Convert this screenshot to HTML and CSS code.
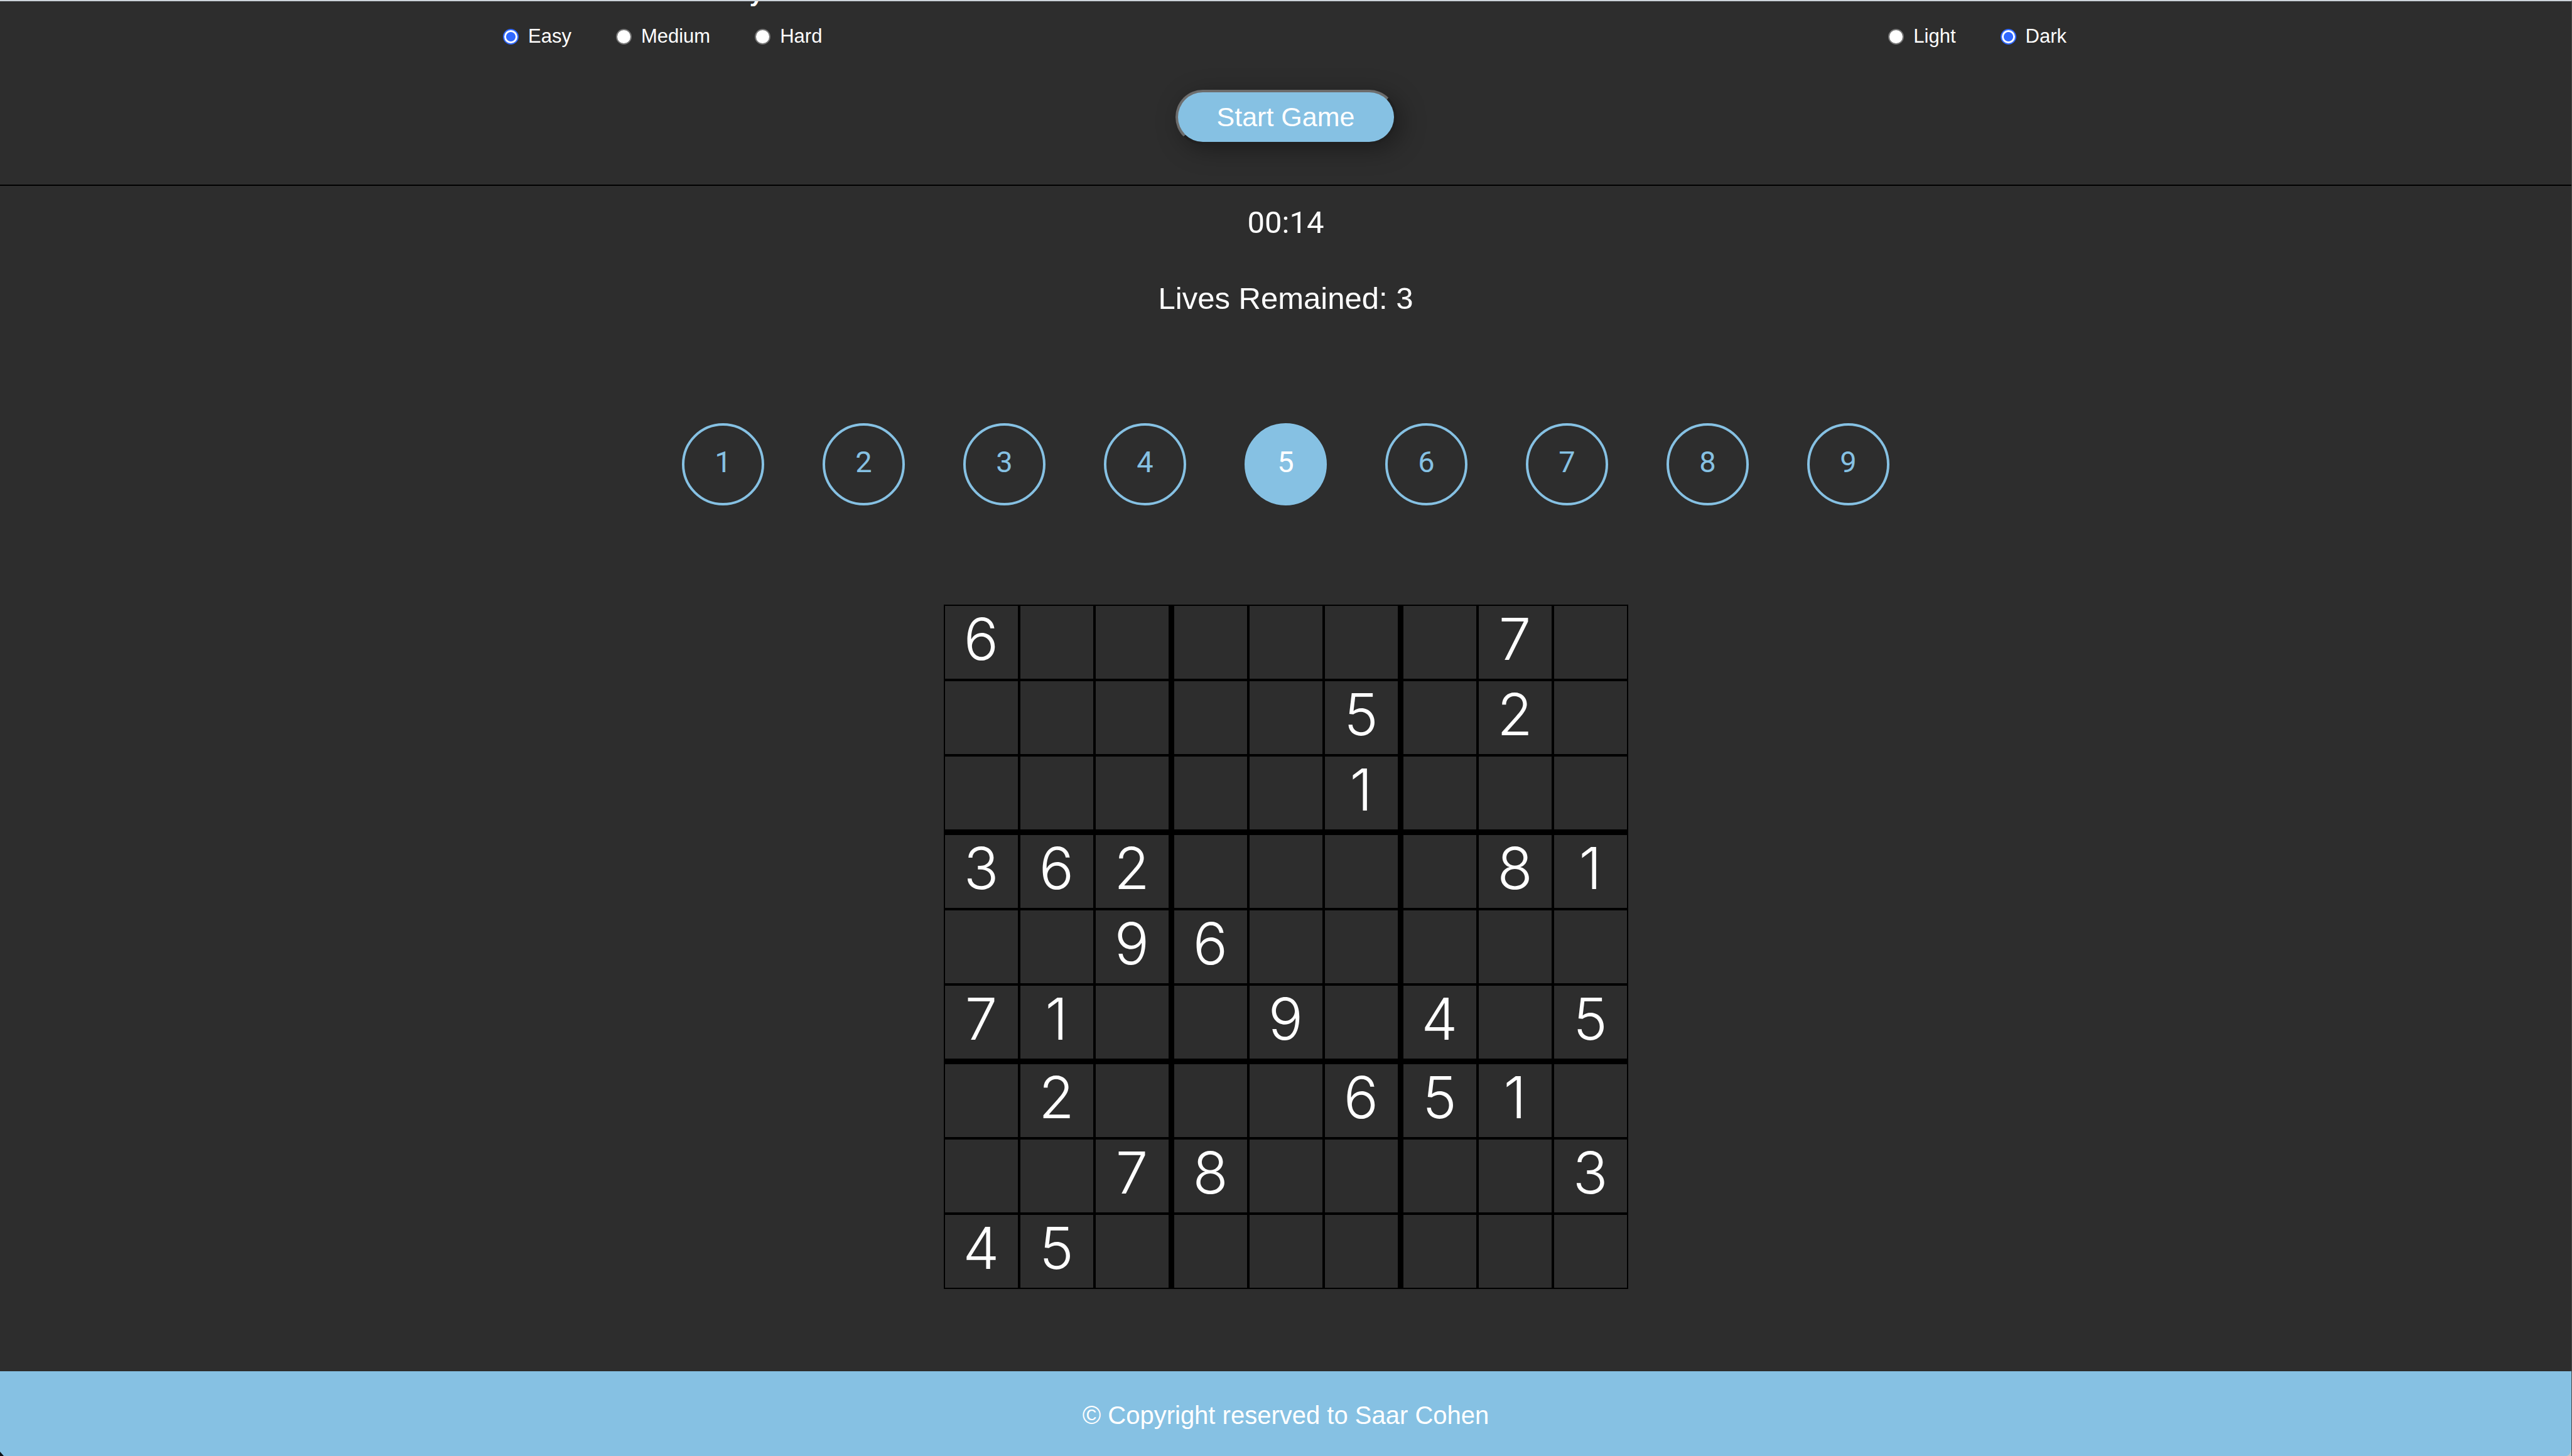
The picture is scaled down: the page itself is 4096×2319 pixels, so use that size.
FILE: index.html
```html
<!DOCTYPE html>
<html lang="en">
<head>
<meta charset="utf-8">
<title>Sudoku</title>
<link rel="stylesheet" href="styles.css">
</head>
<body>
<div class="app">
  <header class="setup">
    <div class="options">
      <section class="option">
        <h2 class="option-title">Choose Difficulty</h2>
        <div class="choices">
          <label class="choice"><input class="radio" type="radio" name="difficulty" checked>Easy</label>
          <label class="choice"><input class="radio" type="radio" name="difficulty">Medium</label>
          <label class="choice"><input class="radio" type="radio" name="difficulty">Hard</label>
        </div>
      </section>
      <section class="option">
        <div class="choices">
          <label class="choice"><input class="radio" type="radio" name="theme">Light</label>
          <label class="choice"><input class="radio" type="radio" name="theme" checked>Dark</label>
        </div>
      </section>
    </div>
    <button class="start" type="button">Start Game</button>
  </header>
  <main class="game">
    <p class="status timer">00:14</p>
    <p class="status">Lives Remained: 3</p>
    <div class="numbers">
      <button class="number" type="button">1</button>
      <button class="number" type="button">2</button>
      <button class="number" type="button">3</button>
      <button class="number" type="button">4</button>
      <button class="number selected" type="button">5</button>
      <button class="number" type="button">6</button>
      <button class="number" type="button">7</button>
      <button class="number" type="button">8</button>
      <button class="number" type="button">9</button>
    </div>
    <table class="board">
      <tbody>
        <tr><td>6</td><td></td><td></td><td></td><td></td><td></td><td></td><td>7</td><td></td></tr>
        <tr><td></td><td></td><td></td><td></td><td></td><td>5</td><td></td><td>2</td><td></td></tr>
        <tr><td></td><td></td><td></td><td></td><td></td><td>1</td><td></td><td></td><td></td></tr>
        <tr><td>3</td><td>6</td><td>2</td><td></td><td></td><td></td><td></td><td>8</td><td>1</td></tr>
        <tr><td></td><td></td><td>9</td><td>6</td><td></td><td></td><td></td><td></td><td></td></tr>
        <tr><td>7</td><td>1</td><td></td><td></td><td>9</td><td></td><td>4</td><td></td><td>5</td></tr>
        <tr><td></td><td>2</td><td></td><td></td><td></td><td>6</td><td>5</td><td>1</td><td></td></tr>
        <tr><td></td><td></td><td>7</td><td>8</td><td></td><td></td><td></td><td></td><td>3</td></tr>
        <tr><td>4</td><td>5</td><td></td><td></td><td></td><td></td><td></td><td></td><td></td></tr>
      </tbody>
    </table>
  </main>
  <footer class="footer">© Copyright reserved to Saar Cohen</footer>
</div>
</body>
</html>
```
FILE: styles.css
```css
* {
  box-sizing: border-box;
}

body {
  margin: 0;
  background: #2d2d2d;
  color: #fff;
  font-family: "Liberation Sans", Arial, sans-serif;
}

.app {
  position: relative;
  display: flex;
  flex-direction: column;
  min-height: 100vh;
  border-top: 2px solid #ccd3da;
  border-right: 1px solid #4a4a4a;
}

/* Rounded lower window corners */
.app::before,
.app::after {
  content: "";
  position: absolute;
  bottom: 0;
}

.app::before {
  right: 0;
  width: 8px;
  height: 13px;
  background: radial-gradient(ellipse 100% 100% at 0 0, transparent 96%, #c4c4c4 100%);
}

.app::after {
  left: 0;
  width: 6px;
  height: 7px;
  background: #0d1117;
  clip-path: polygon(0 0, 100% 100%, 0 100%);
}

.setup {
  display: flex;
  flex-direction: column;
  align-items: center;
  padding-bottom: 64px;
  border-bottom: 2px solid #000;
}

.options {
  display: flex;
  justify-content: space-between;
  align-items: flex-end;
  align-self: stretch;
  height: 74px;
  padding: 0 804px 0 801px;
  overflow: hidden;
}

.option {
  display: flex;
  flex-direction: column;
  align-items: center;
}

.option-title {
  margin: 0 0 29px;
  font-size: 39px;
  line-height: 44px;
}

.choices {
  display: flex;
  gap: 71px;
}

.choice {
  display: flex;
  align-items: center;
  gap: 15px;
  font-size: 31px;
  line-height: 36px;
}

.radio {
  appearance: none;
  width: 25px;
  height: 25px;
  margin: 0;
  border: 2px solid #767676;
  border-radius: 50%;
  background: #fff;
}

.radio:checked {
  border-color: #3068ff;
  background: radial-gradient(circle, #3068ff 7px, #fff 8px);
}

.start {
  width: 352px;
  height: 87px;
  margin-top: 67px;
  padding: 0 0 2px;
  border: 4px solid;
  border-color: #6d6d6d #212121 #212121 #6d6d6d;
  border-radius: 44px;
  background: #86c1e3;
  color: #fff;
  font: 43px/48px "Liberation Sans", Arial, sans-serif;
  box-shadow: 8px 8px 38px rgba(0, 0, 0, 0.35);
}

.game {
  display: flex;
  flex-direction: column;
  align-items: center;
  padding: 31px 0 131px;
}

.status {
  margin: 0 0 64px;
  font-size: 49px;
  line-height: 56px;
}

.timer {
  font-family: Roboto, "Liberation Sans", sans-serif;
}

.numbers {
  display: flex;
  gap: 93px;
  margin-top: 107px;
}

.number {
  width: 131px;
  height: 131px;
  padding: 0 0 8px;
  border: 4px solid #86c1e3;
  border-radius: 50%;
  background: none;
  color: #86c1e3;
  font: 47px/56px Roboto, "Liberation Sans", sans-serif;
}

.number.selected {
  background: #86c1e3;
  color: #fff;
}

.board {
  margin-top: 158px;
  border-spacing: 0;
  font-family: Inter, "Liberation Sans", sans-serif;
  font-size: 92px;
  font-weight: 300;
  line-height: 106px;
  text-align: center;
}

.board td {
  box-sizing: content-box;
  width: 116px;
  height: 106px;
  padding: 0 0 10px;
  border: 2px solid #000;
}

.board td:nth-child(3n):not(:last-child) {
  border-right-width: 7px;
}

.board tr:nth-child(3n):not(:last-child) td {
  border-bottom-width: 7px;
}

.footer {
  flex: 1;
  padding: 47px 0 42px;
  background: #86c1e3;
  font-size: 40px;
  line-height: 46px;
  text-align: center;
}
```
